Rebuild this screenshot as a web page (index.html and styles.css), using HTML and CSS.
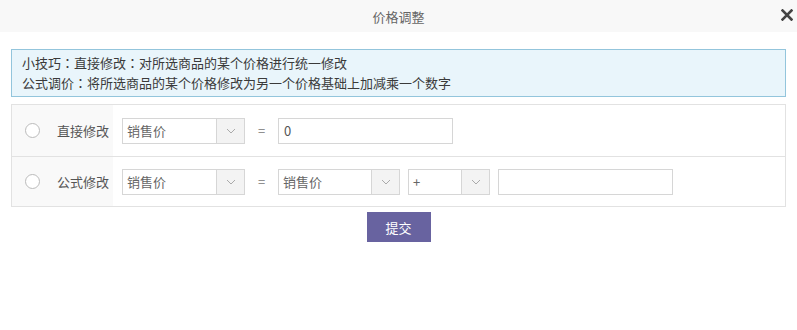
FILE: index.html
```html
<!DOCTYPE html>
<html lang="zh-CN">
<head>
<meta charset="UTF-8">
<title>价格调整</title>
<link rel="stylesheet" href="styles.css">
</head>
<body>
<div class="dialog-head">
    <span class="dialog-title">价格调整</span>
    <span class="dialog-close">
        <svg width="12" height="12" viewBox="0 0 12 12"><path d="M1.5 1.5 L10.5 10.5 M10.5 1.5 L1.5 10.5" stroke="#444" stroke-width="2.6" stroke-linecap="square"/></svg>
    </span>
</div>
<div class="dialog-body">
    <div class="tips">
        <div>小技巧<span class="colon" lang="zh-TW">：</span>直接修改<span class="colon" lang="zh-TW">：</span>对所选商品的某个价格进行统一修改</div>
        <div>公式调价<span class="colon" lang="zh-TW">：</span>将所选商品的某个价格修改为另一个价格基础上加减乘一个数字</div>
    </div>
    <div class="edit-table">
        <div class="edit-row">
            <div class="edit-label">
                <span class="radio"></span>
                <span class="label-text">直接修改</span>
            </div>
            <div class="edit-fields">
                <div class="select w-price"><span class="select-text">销售价</span><span class="select-arrow"><svg width="10" height="6" viewBox="0 0 10 6"><path d="M1 1 L5 5 L9 1" fill="none" stroke="#aaa" stroke-width="1"/></svg></span></div>
                <span class="equal">=</span>
                <div class="text-input">0</div>
            </div>
        </div>
        <div class="edit-row">
            <div class="edit-label">
                <span class="radio"></span>
                <span class="label-text">公式修改</span>
            </div>
            <div class="edit-fields">
                <div class="select w-price"><span class="select-text">销售价</span><span class="select-arrow"><svg width="10" height="6" viewBox="0 0 10 6"><path d="M1 1 L5 5 L9 1" fill="none" stroke="#aaa" stroke-width="1"/></svg></span></div>
                <span class="equal">=</span>
                <div class="select w-price2"><span class="select-text">销售价</span><span class="select-arrow"><svg width="10" height="6" viewBox="0 0 10 6"><path d="M1 1 L5 5 L9 1" fill="none" stroke="#aaa" stroke-width="1"/></svg></span></div>
                <div class="select w-op"><span class="select-text">+</span><span class="select-arrow"><svg width="10" height="6" viewBox="0 0 10 6"><path d="M1 1 L5 5 L9 1" fill="none" stroke="#aaa" stroke-width="1"/></svg></span></div>
                <div class="text-input"></div>
            </div>
        </div>
    </div>
    <div class="actions">
        <button class="btn-submit" type="button">提交</button>
    </div>
</div>
</body>
</html>
```
FILE: styles.css
```css
body {
margin: 0;
background-color: #fff;
font-family: "Noto Sans CJK SC", "Liberation Sans", sans-serif;
font-size: 13px;
color: #333;
}
.dialog-head {
height: 32px;
background-color: #f8f8f8;
display: flex;
align-items: center;
justify-content: center;
position: relative;
}
.dialog-title {
color: #666;
font-size: 13px;
}
.dialog-close {
position: absolute;
right: 4px;
top: 9px;
width: 12px;
height: 12px;
display: flex;
}
.dialog-body {
padding: 17px 11px 0 11px;
}
.tips {
background-color: #e9f5fb;
border: 1px solid #93c5dc;
padding: 3px 10px 3px 10px;
line-height: 20px;
color: #3a3a3a;
}
.colon {
font-family: "Noto Sans CJK TC", sans-serif;
}
.edit-table {
margin-top: 7px;
border: 1px solid #e2e2e2;
}
.edit-row {
display: flex;
height: 51px;
}
.edit-row + .edit-row {
height: 49px;
border-top: 1px solid #e2e2e2;
}
.edit-label {
width: 101px;
background-color: #f9f9f9;
display: flex;
align-items: center;
}
.radio {
width: 13px;
height: 13px;
border: 1px solid #bbb;
border-radius: 50%;
background-color: #fff;
margin-left: 13px;
}
.label-text {
margin-left: 17px;
color: #555;
}
.edit-fields {
display: flex;
align-items: center;
padding-left: 9px;
}
.select {
height: 24px;
border: 1px solid #d6d6d6;
display: flex;
background-color: #fff;
}
.select-text {
flex: 1;
padding-left: 4px;
line-height: 24px;
color: #666;
}
.select-arrow {
width: 27px;
border-left: 1px solid #d6d6d6;
background-color: #f3f3f3;
display: flex;
align-items: center;
justify-content: center;
}
.w-price {
width: 121px;
}
.w-price2 {
width: 120px;
}
.w-op {
width: 80px;
margin-left: 8px;
}
.equal {
width: 33px;
text-align: center;
color: #777;
}
.text-input {
width: 168px;
height: 24px;
border: 1px solid #d6d6d6;
padding-left: 5px;
line-height: 24px;
color: #555;
}
.w-op + .text-input {
margin-left: 8px;
}
.actions {
display: flex;
justify-content: center;
margin-top: 5px;
}
.btn-submit {
width: 64px;
height: 30px;
border: none;
background-color: #6863a0;
color: #fff;
font-family: "Noto Sans CJK SC", "Liberation Sans", sans-serif;
font-size: 13px;
padding: 0;
}
```
